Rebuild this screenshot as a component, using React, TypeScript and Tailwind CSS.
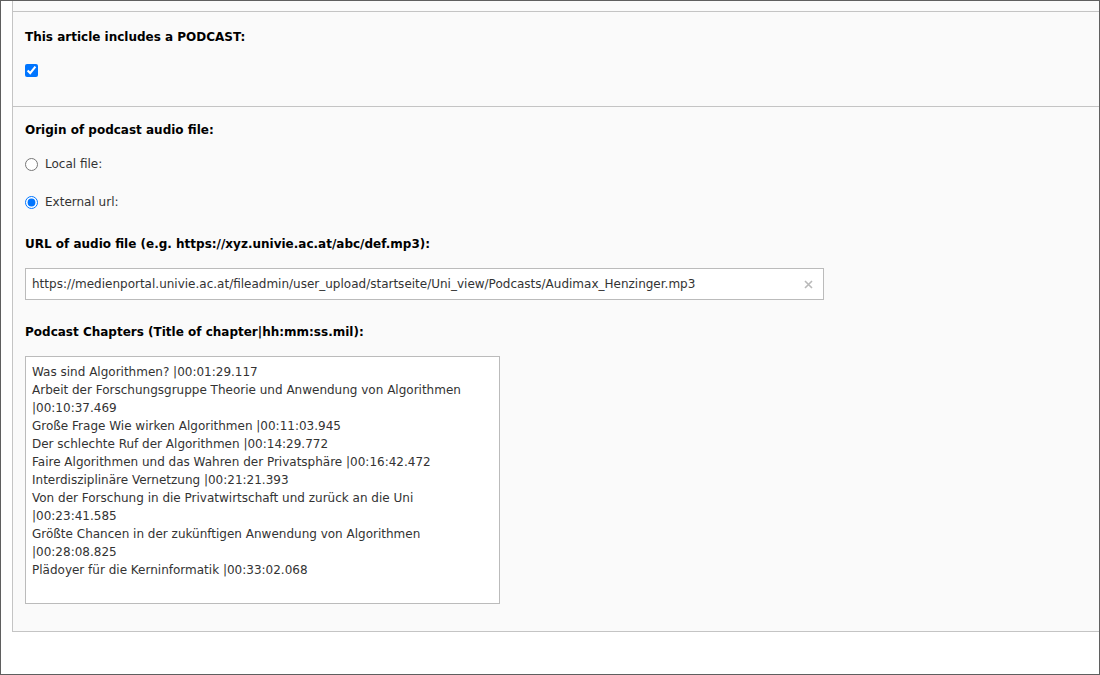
import React from "react";

const chapters = [
  "Was sind Algorithmen? |00:01:29.117",
  "Arbeit der Forschungsgruppe Theorie und Anwendung von Algorithmen",
  "|00:10:37.469",
  "Große Frage Wie wirken Algorithmen |00:11:03.945",
  "Der schlechte Ruf der Algorithmen |00:14:29.772",
  "Faire Algorithmen und das Wahren der Privatsphäre |00:16:42.472",
  "Interdisziplinäre Vernetzung |00:21:21.393",
  "Von der Forschung in die Privatwirtschaft und zurück an die Uni",
  "|00:23:41.585",
  "Größte Chancen in der zukünftigen Anwendung von Algorithmen",
  "|00:28:08.825",
  "Plädoyer für die Kerninformatik |00:33:02.068",
];

function Label({ children }: { children: React.ReactNode }) {
  return <div className="h-[18px] leading-[18px] font-bold text-black">{children}</div>;
}

export default function App() {
  return (
    <div
      className="w-[1100px] h-[675px] border border-[#5f5f5f] bg-white overflow-hidden text-[12px] text-[#333]"
      style={{ fontFamily: '"DejaVu Sans", Verdana, sans-serif' }}
    >
      <div className="ml-[11px] border-l border-[#c4c4c4] bg-[#fafafa]">
        {/* spill of the previous section */}
        <div className="h-[11px] border-b border-[#c4c4c4]" />

        {/* podcast toggle */}
        <div className="pt-[16px] pl-[12px] pb-[29px] border-b border-[#c4c4c4]">
          <Label>This article includes a PODCAST:</Label>
          <div className="mt-[18px] h-[13px] flex">
            <input type="checkbox" defaultChecked className="m-0 w-[13px] h-[13px]" />
          </div>
        </div>

        {/* podcast source */}
        <div className="pt-[14px] pl-[12px] pb-[27px] border-b border-[#c4c4c4]">
          <Label>Origin of podcast audio file:</Label>
          <label className="mt-[16px] h-[18px] flex items-center gap-[7px]">
            <input type="radio" name="origin" className="m-0 w-[13px] h-[13px]" />
            <span>Local file:</span>
          </label>
          <label className="mt-[20px] h-[18px] flex items-center gap-[7px]">
            <input type="radio" name="origin" defaultChecked className="m-0 w-[13px] h-[13px]" />
            <span>External url:</span>
          </label>

          <div className="mt-[24px]">
            <Label>URL of audio file (e.g. https://xyz.univie.ac.at/abc/def.mp3):</Label>
          </div>
          <div className="mt-[15px] w-[799px] h-[32px] border border-[#bbb] bg-white flex items-center pl-[6px] pr-[10px]">
            <span className="flex-1 whitespace-nowrap overflow-hidden">
              https://medienportal.univie.ac.at/fileadmin/user_upload/startseite/Uni_view/Podcasts/Audimax_Henzinger.mp3
            </span>
            <svg width="9" height="9" viewBox="0 0 9 9" className="shrink-0">
              <path d="M1 1 L8 8 M8 1 L1 8" stroke="#b9b9b9" strokeWidth="1.6" />
            </svg>
          </div>

          <div className="mt-[23px]">
            <Label>Podcast Chapters (Title of chapter|hh:mm:ss.mil):</Label>
          </div>
          <div className="mt-[15px] w-[475px] h-[248px] border border-[#bbb] bg-white px-[6px] py-[6px] leading-[18px]">
            {chapters.map((c, i) => (
              <div key={i} className="whitespace-nowrap">{c}</div>
            ))}
          </div>
        </div>
      </div>
    </div>
  );
}
